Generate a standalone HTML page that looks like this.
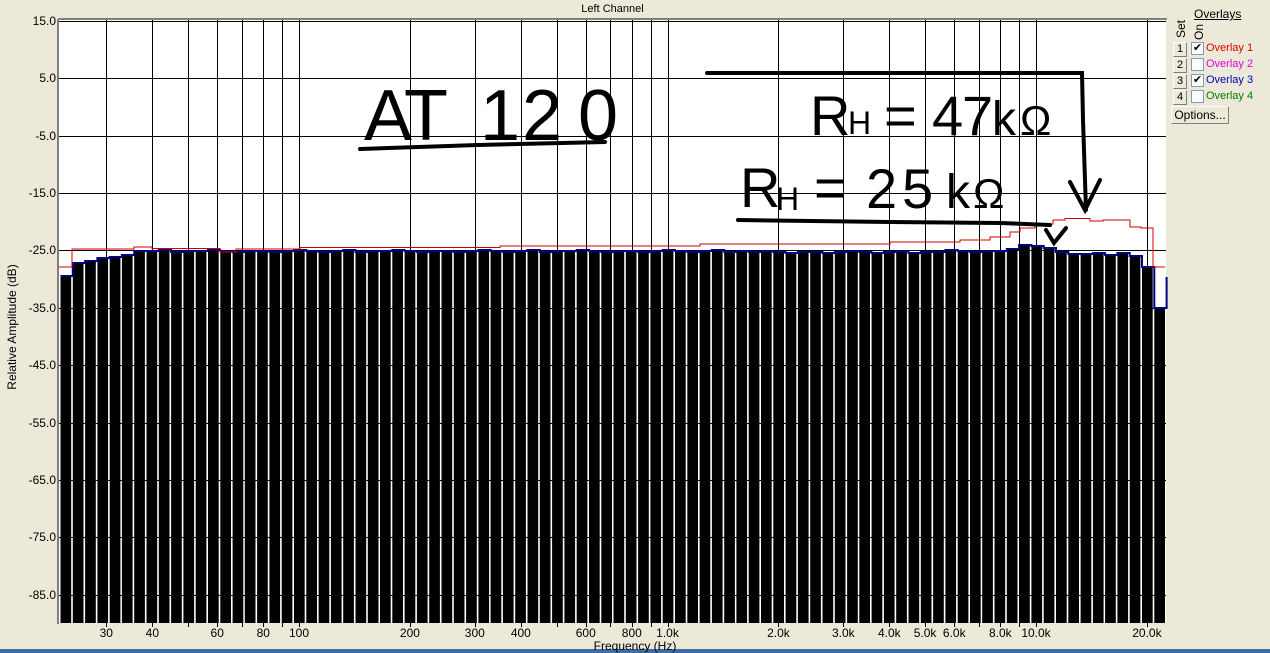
<!DOCTYPE html>
<html><head><meta charset="utf-8">
<style>
html,body{margin:0;padding:0;}
body{width:1270px;height:653px;background:#ECE9D8;position:relative;overflow:hidden;font-family:"Liberation Sans",sans-serif;}
.lbl{position:absolute;font-size:12px;color:#000;}
.btn{position:absolute;width:12px;height:13px;background:#ECE9D8;border:1px solid;border-color:#fff #808080 #808080 #fff;font-size:11px;text-align:center;line-height:13px;box-sizing:content-box;}
.cb{position:absolute;width:11px;height:11px;background:#fff;border:1px solid #7f9db9;font-size:11px;line-height:11px;text-align:center;}
.ov{position:absolute;font-size:11px;left:1206px;}
</style></head><body>
<svg id="g" width="1270" height="653" style="position:absolute;left:0;top:0" xmlns="http://www.w3.org/2000/svg">
<rect x="59" y="19" width="1107" height="604" fill="#fff"/>
<g id="grid" stroke="#000" stroke-width="1"></g>
<g id="bars" fill="#000"></g>
<path id="blue" fill="none" stroke="#000080" stroke-width="2"/>
<path fill="none" stroke="#d00000" stroke-width="1" d="M59,267H72V249H134V247H152V248.5H220V252H236V249H300V247.5H500V246H700V244H890V242H960V240H990V237H1010V232H1020V228H1035V224H1053V220H1065V218.5H1090V221H1103V220H1130V227H1141V228H1153V267H1165"/>
<line x1="58" y1="19" x2="1167" y2="19" stroke="#808080" stroke-width="2"/>
<line x1="58" y1="19" x2="58" y2="624" stroke="#808080" stroke-width="2"/>
<g id="ticks" stroke="#000"></g>
<g fill="none" stroke="#000" stroke-width="4" stroke-linecap="round">
<path d="M360,149 L478,145 L605,142"/>
<path d="M707,73 H1082 L1083,120 L1086,210"/>
<path d="M1070,182 L1085,210 L1100,180"/>
<path d="M738,220 L890,222 L1000,223 L1050,225"/>
<path d="M1046,230 L1054,243 L1066,228"/>
</g>
<g font-family="Liberation Sans, sans-serif" fill="#000">
<text x="364" y="140" font-size="72">A</text>
<text x="404" y="140" font-size="72">T</text>
<text x="480" y="140" font-size="72">1</text>
<text x="522" y="140" font-size="72">2</text>
<text x="578" y="140" font-size="72">0</text>
<text x="810" y="135" font-size="56">R</text>
<text x="848" y="134" font-size="32">H</text>
<text x="884" y="135" font-size="56">=</text>
<text x="932" y="135" font-size="56">4</text>
<text x="962" y="135" font-size="56">7</text>
<text x="992" y="135" font-size="48">k</text>
<text x="1020" y="135" font-size="42">Ω</text>
<text x="740" y="207" font-size="56">R</text>
<text x="776" y="210" font-size="32">H</text>
<text x="814" y="207" font-size="56">=</text>
<text x="866" y="208" font-size="56">2</text>
<text x="902" y="208" font-size="56">5</text>
<text x="946" y="208" font-size="48">k</text>
<text x="973" y="208" font-size="42">Ω</text>
</g>
<rect x="0" y="649" width="1270" height="4" fill="#3a6ea5"/>
</svg>
<div class="lbl" style="left:0;width:1225px;text-align:center;top:3px;font-size:11px">Left Channel</div>
<div id="ylab"></div>
<div id="xlab"></div>
<div class="lbl" style="left:-58px;top:320px;width:140px;text-align:center;transform:rotate(-90deg);font-size:12px">Relative Amplitude (dB)</div>
<div class="lbl" style="left:560px;width:150px;text-align:center;top:639px;">Frequency (Hz)</div>
<div class="lbl" style="left:1194px;top:7px;text-decoration:underline">Overlays</div>
<div class="lbl" style="left:1172px;top:22px;transform:rotate(-90deg);font-size:12px">Set</div>
<div class="lbl" style="left:1191px;top:25px;transform:rotate(-90deg);font-size:12px">On</div>
<div class="btn" style="left:1173px;top:42px">1</div><div class="cb" style="left:1191px;top:42px">✔</div><div class="ov" style="top:42px;color:#e00000">Overlay 1</div>
<div class="btn" style="left:1173px;top:58px">2</div><div class="cb" style="left:1191px;top:58px"></div><div class="ov" style="top:58px;color:#e000e0">Overlay 2</div>
<div class="btn" style="left:1173px;top:74px">3</div><div class="cb" style="left:1191px;top:74px">✔</div><div class="ov" style="top:74px;color:#0000c0">Overlay 3</div>
<div class="btn" style="left:1173px;top:90px">4</div><div class="cb" style="left:1191px;top:90px"></div><div class="ov" style="top:90px;color:#008000">Overlay 4</div>
<div class="btn" style="left:1171px;top:106px;width:56px;height:16px;line-height:16px;font-size:12px">Options...</div>
<script>
const NS="http://www.w3.org/2000/svg";
const fx=f=>299+(Math.log10(f)-2)*368.5;
const fy=v=>20.7+(15-v)*5.74;
const grid=document.getElementById('grid'),ticks=document.getElementById('ticks');
function ln(p,x1,y1,x2,y2){const l=document.createElementNS(NS,'line');l.setAttribute('x1',x1);l.setAttribute('y1',y1);l.setAttribute('x2',x2);l.setAttribute('y2',y2);p.appendChild(l);}
const freqs=[];
for(const d of [10,100,1000,10000])for(let m=1;m<10;m++){const f=d*m;if(f>=30&&f<=20000)freqs.push(f);}
freqs.forEach(f=>{const x=Math.round(fx(f))+0.5;ln(grid,x,19,x,623);ln(ticks,x,623,x,627);});
let yl='';
for(let v=15;v>=-85;v-=10){const y=Math.round(fy(v))+0.5;ln(grid,59,y,1166,y);yl+=`<div class="lbl" style="left:0;width:56px;text-align:right;top:${y-8}px">${v.toFixed(1)}</div>`;}
document.getElementById('ylab').innerHTML=yl;
const xl=[[30,'30'],[40,'40'],[60,'60'],[80,'80'],[100,'100'],[200,'200'],[300,'300'],[400,'400'],[600,'600'],[800,'800'],[1000,'1.0k'],[2000,'2.0k'],[3000,'3.0k'],[4000,'4.0k'],[5000,'5.0k'],[6000,'6.0k'],[8000,'8.0k'],[10000,'10.0k'],[20000,'20.0k']];
document.getElementById('xlab').innerHTML=xl.map(([f,t])=>`<div class="lbl" style="left:${fx(f)-25}px;width:50px;text-align:center;top:626px">${t}</div>`).join('');
const tops=[276,263,261,258,257,255,251];
const pat=[251,251,252,251,250,251,252,251,250,252,251,251,250,251,252];
for(let i=7;i<77;i++)tops.push(pat[i%pat.length]+(i>55&&i<72?1:0));
tops.push(249,245,246,248,252,254,254,253,255,253,256,267,308);
const bars=document.getElementById('bars');let d='';
const p=12.29,x0=60.5;
tops.forEach((t,i)=>{const x=x0+i*p;const w=(i==89)?1165-x:p-1.6;const r=document.createElementNS(NS,'rect');r.setAttribute('x',x.toFixed(1));r.setAttribute('y',t);r.setAttribute('width',w.toFixed(1));r.setAttribute('height',623-t);bars.appendChild(r);
d+=(i==0?`M${x},${t}`:`V${t}`)+`H${(x+p).toFixed(1)}`;});
d+='V277';
document.getElementById('blue').setAttribute('d',d);
</script>
</body></html>
